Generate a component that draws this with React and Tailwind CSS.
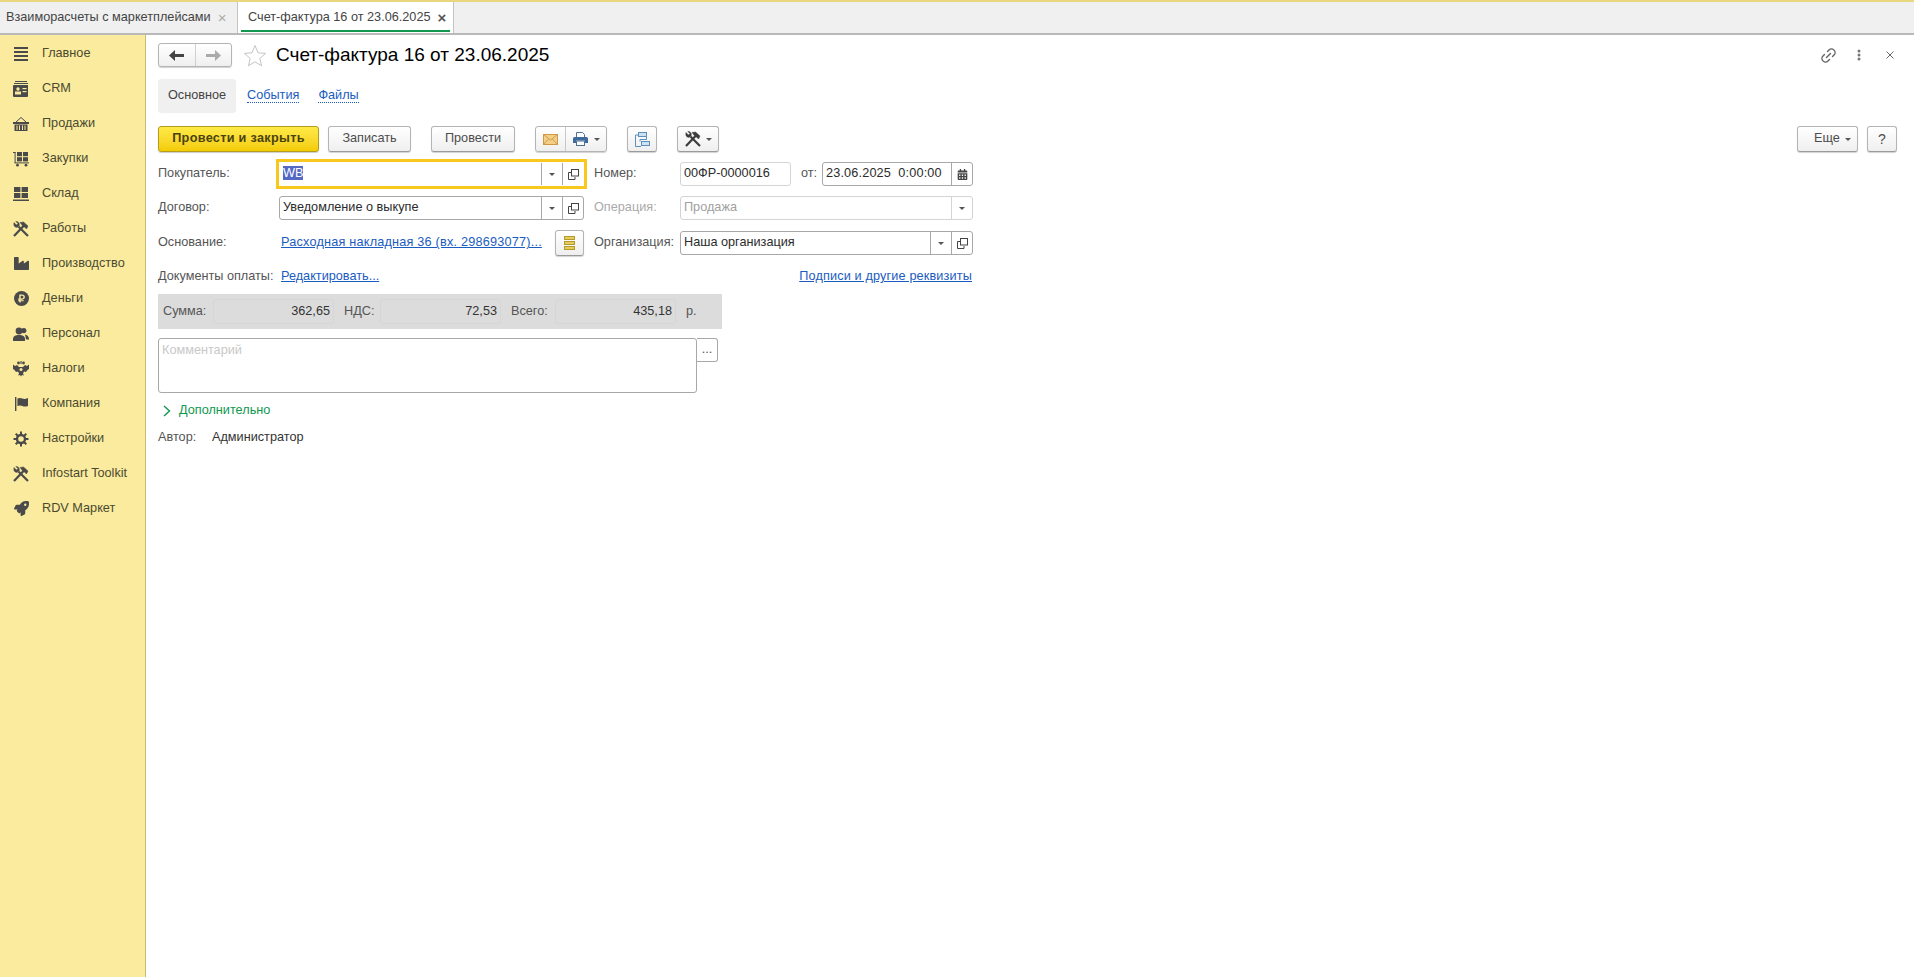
import { FaIndustry, FaRocket, FaRubleSign, FaCalendarAlt } from 'react-icons/fa';
import { FiLink2 } from 'react-icons/fi';

const BarsIcon = () => (
  <svg width="16" height="16" viewBox="0 0 16 16" fill="#4a4a4a">
    <rect x="1" y="1" width="14" height="2" />
    <rect x="1" y="5" width="14" height="2" />
    <rect x="1" y="9" width="14" height="2" />
    <rect x="1" y="13" width="14" height="2" />
  </svg>
);

const CardIcon = () => (
  <svg width="16" height="16" viewBox="0 0 16 16" fill="#4a4a4a">
    <rect x="2" y="0" width="12" height="1" />
    <rect x="1" y="2" width="14" height="1" />
    <path d="M1 4h14a1 1 0 0 1 0 0v11a1 1 0 0 1-1 1H1a1 1 0 0 1-1-1V5a1 1 0 0 1 1-1z" />
    <circle cx="5" cy="8" r="1.7" fill="#fbeb9e" />
    <rect x="2" y="10.5" width="6" height="3" fill="#fbeb9e" />
    <rect x="9.5" y="7" width="4" height="1.2" fill="#fbeb9e" />
    <rect x="9.5" y="10" width="4" height="1.2" fill="#fbeb9e" />
  </svg>
);

const BasketIcon = () => (
  <svg width="16" height="16" viewBox="0 0 16 16" fill="#4a4a4a">
    <path d="M3 6 L8 1.5 L13 6" fill="none" stroke="#4a4a4a" />
    <rect x="0" y="6" width="16" height="2" />
    <path d="M1.5 8.5h13V15h-13zM3.5 9.5v4.5h1V9.5zM6 9.5v4.5h1V9.5zM9 9.5v4.5h1V9.5zM11.5 9.5v4.5h1V9.5z" fillRule="evenodd" />
  </svg>
);

const CartIcon = () => (
  <svg width="16" height="16" viewBox="0 0 16 16" fill="#4a4a4a">
    <rect x="0" y="1" width="2.5" height="1" />
    <rect x="1.6" y="1" width="1" height="11" />
    <rect x="4" y="1" width="5" height="4.2" />
    <rect x="10" y="1" width="5" height="4.2" />
    <rect x="4" y="6.2" width="5" height="4.2" />
    <rect x="10" y="6.2" width="5" height="4.2" />
    <rect x="1.6" y="11.4" width="14.4" height="1" />
    <circle cx="4.5" cy="14.2" r="1.4" />
    <circle cx="13" cy="14.2" r="1.4" />
  </svg>
);

const StockIcon = () => (
  <svg width="16" height="16" viewBox="0 0 16 16" fill="#4a4a4a">
    <rect x="1" y="1" width="6.4" height="5" />
    <rect x="8.6" y="1" width="6.4" height="5" />
    <rect x="1" y="7" width="6.4" height="5" />
    <rect x="8.6" y="7" width="6.4" height="5" />
    <rect x="0" y="13.5" width="16" height="1.5" />
  </svg>
);

const ToolsIcon = ({ size = 16, color = '#4a4a4a' }) => (
  <svg width={size} height={size} viewBox="0 0 16 16" fill={color} stroke={color}>
    <path d="M1 15 11 4.5" strokeWidth="2.2" />
    <path d="M7 1.5 10.5 1 15 5l-1.5 3-2-2-1.5-.5-1-1.5z" strokeWidth="0.5" />
    <path d="M15 15 5.5 5.5" strokeWidth="2.2" />
    <path d="M1 1.5 3.5 4 5 2.5 2.7.5C5 0 7 2 6.3 4.4L4.5 6.3C2.4 7 0 5 1 1.5z" strokeWidth="0.4" />
  </svg>
);

const MoneyIcon = () => (
  <span className="flex h-[15px] w-[15px] items-center justify-center rounded-full bg-[#4a4a4a]">
    <FaRubleSign className="text-[#fbeb9e]" size={9} />
  </span>
);

const PeopleIcon = () => (
  <svg width="16" height="14" viewBox="0 0 16 14" fill="#4a4a4a">
    <circle cx="10.8" cy="3.6" r="2.6" />
    <path d="M12 7.5c2 .4 3.6 1.6 4 4v1h-3l-.5-3z" />
    <circle cx="6" cy="4" r="3.4" />
    <path d="M0 14v-2c0-2.6 2.4-4 6-4s6 1.4 6 4v2z" />
  </svg>
);

const EagleIcon = () => (
  <svg width="16" height="16" viewBox="0 0 16 16" fill="#4a4a4a">
    <circle cx="5.5" cy="2" r="1.4" />
    <circle cx="10.5" cy="2" r="1.4" />
    <rect x="7.4" y="0" width="1.2" height="3" />
    <path d="M0 3.5 2 5l2-1 2 2h4l2-2 2 1 2-1.5V8l-1.5 1L13 11l-2-.5-1 2 1 2-2-.5-1 1.5-1-1.5-2 .5 1-2-1-2L3 11 1.5 9 0 8z" />
    <circle cx="8" cy="8.5" r="1.5" fill="#fbeb9e" />
  </svg>
);

const FlagIcon = () => (
  <svg width="13" height="16" viewBox="0 0 13 16" fill="#4a4a4a">
    <rect x="0" y="1" width="1.4" height="14" />
    <path d="M2.4 2.5c2-1 3.6-.6 5 0s3 .6 5.6-.5v8c-2.6.8-4.2.6-5.6 0s-3-.8-5 0z" />
  </svg>
);

const GearIcon = () => (
  <svg width="16" height="16" viewBox="0 0 16 16" fill="none" stroke="#4a4a4a">
    <circle cx="8" cy="8" r="4" strokeWidth="2.4" />
    <path d="M8 .5v3M8 12.5v3M.5 8h3M12.5 8h3M2.7 2.7l2.1 2.1M11.2 11.2l2.1 2.1M13.3 2.7l-2.1 2.1M4.8 11.2l-2.1 2.1" strokeWidth="2" />
  </svg>
);

const MENU = [
  ['Главное', <BarsIcon />],
  ['CRM', <CardIcon />],
  ['Продажи', <BasketIcon />],
  ['Закупки', <CartIcon />],
  ['Склад', <StockIcon />],
  ['Работы', <ToolsIcon />],
  ['Производство', <FaIndustry size={15} />],
  ['Деньги', <MoneyIcon />],
  ['Персонал', <PeopleIcon />],
  ['Налоги', <EagleIcon />],
  ['Компания', <FlagIcon />],
  ['Настройки', <GearIcon />],
  ['Infostart Toolkit', <ToolsIcon />],
  ['RDV Маркет', <FaRocket size={15} />],
];

const Arrow = () => <span className="h-0 w-0 border-x-[3px] border-t-[3px] border-x-transparent border-t-[#555]" />;

const OpenIcon = () => (
  <svg width="11" height="11" viewBox="0 0 11 11" fill="none" stroke="#444">
    <rect x="3.5" y="0.5" width="7" height="6.5" />
    <path d="M3 3.5H0.5V10.5H7V8" />
  </svg>
);

const Btn = ({ className = '', children }) => (
  <button className={`flex h-[26px] items-center justify-center rounded-[3px] border border-[#b4b4b4] border-b-[#9a9a9a] bg-gradient-to-b from-white to-[#efefef] text-[#4d4d4d] shadow-[0_1px_1px_rgba(0,0,0,0.18)] ${className}`}>
    {children}
  </button>
);

const Field = ({ value, className = '', disabled, arrow, open, focus }) => {
  const border = disabled || open === 'light' ? 'border-[#d4d4d4]' : 'border-[#a8a8a8]';
  return (
    <div className={`flex h-[24px] items-center rounded-[3px] border ${border} bg-white ${className} ${focus ? 'border-transparent' : ''}`}>
      <span className={`min-w-0 flex-1 pl-[3px] ${disabled ? 'text-[#a0a0a0]' : 'text-[#2b2b2b]'}`}>
        {focus ? <span className="bg-[#5468c4] text-white">{value}</span> : value}
      </span>
      {arrow && (
        <span className={`flex h-full w-[21px] items-center justify-center border-l ${border}`}>
          <Arrow />
        </span>
      )}
      {open && open !== 'light' && (
        <span className={`flex h-full w-[21px] items-center justify-center border-l ${border}`}>
          <OpenIcon />
        </span>
      )}
    </div>
  );
};

const Label = ({ className = '', children }) => <span className={`shrink-0 text-[#555] ${className}`}>{children}</span>;

const Lnk = ({ className = '', children }) => <a className={`text-[#1a5cc0] underline ${className}`}>{children}</a>;

const Total = ({ label, labelW, value }) => (
  <>
    <span className={`shrink-0 text-[#555] ${labelW}`}>{label}</span>
    <span className="flex h-[25px] w-[121px] shrink-0 items-center justify-end rounded-[3px] border border-[#d6d6d6] pr-[3px] text-[#333]">
      {value}
    </span>
  </>
);

export default function App() {
  return (
    <div className="flex h-screen flex-col overflow-hidden bg-white text-[12.7px] text-[#333] [font-family:'Liberation_Sans',Arial,sans-serif]">
      {/* Tabs */}
      <div className="flex h-[35px] shrink-0 border-y-2 border-t-[#e9d77f] border-b-[#b9b9b9] bg-[#f0f0f0]">
        <div className="flex w-[238px] items-center border-r border-[#c4c4c4] pl-[6px] text-[#444]">
          <span>Взаиморасчеты с маркетплейсами</span>
          <span className="ml-[7px] text-[15px] leading-none text-[#aaa]">×</span>
        </div>
        <div className="relative flex w-[216px] items-center border-r border-[#c4c4c4] bg-white pl-[10px] text-[#444]">
          <span>Счет-фактура 16 от 23.06.2025</span>
          <span className="ml-[7px] text-[15px] font-bold leading-none text-[#555]">×</span>
          <span className="absolute bottom-[1px] left-[3px] right-[3px] h-[2px] bg-[#10984f]" />
        </div>
      </div>

      <div className="flex min-h-0 flex-1">
        {/* Sidebar */}
        <aside className="w-[146px] shrink-0 border-r border-[#c9bb72] bg-[#fbeb9e] pt-[1px]">
          {MENU.map(([name, icon]) => (
            <div key={name} className="flex h-[35px] items-center text-[#4a4a30]">
              <span className="flex w-[42px] justify-center text-[#4a4a4a]">{icon}</span>
              <span>{name}</span>
            </div>
          ))}
        </aside>

        {/* Document form */}
        <main className="min-w-0 flex-1 pl-[12px] pr-[17px] pt-[8px]">
          <div className="flex h-[24px] items-center">
            <div className="flex h-[24px] w-[74px] rounded-[3px] border border-[#b4b4b4] bg-gradient-to-b from-white to-[#efefef] shadow-[0_1px_1px_rgba(0,0,0,0.18)]">
              <span className="flex flex-1 items-center justify-center border-r border-[#d0d0d0]">
                <svg width="15" height="11" viewBox="0 0 15 11" fill="#444"><path d="M0 5.5 6 0v4h9v3H6v4z" /></svg>
              </span>
              <span className="flex flex-1 items-center justify-center">
                <svg width="15" height="11" viewBox="0 0 15 11" fill="#aaa"><path d="M15 5.5 9 0v4H0v3h9v4z" /></svg>
              </span>
            </div>
            <svg className="ml-[11px]" width="24" height="23" viewBox="0 0 24 23" fill="none" stroke="#c4c4c4">
              <path d="M12 1.5 15 8.8l7.6.6-5.8 5 1.8 7.4L12 17.8l-6.6 4 1.8-7.4-5.8-5 7.6-.6z" />
            </svg>
            <h1 className="ml-[9px] -translate-y-px text-[19px] leading-none text-black">Счет-фактура 16 от 23.06.2025</h1>
            <div className="ml-auto flex items-center text-[#666]">
              <FiLink2 size={17} className="-rotate-45" />
              <svg className="ml-[20px]" width="4" height="12" viewBox="0 0 4 12" fill="#777">
                <circle cx="2" cy="2" r="1.5" /><circle cx="2" cy="6" r="1.5" /><circle cx="2" cy="10" r="1.5" />
              </svg>
              <svg className="ml-[25px] mr-[3px]" width="8" height="8" viewBox="0 0 8 8" stroke="#666"><path d="M0.5 0.5 7.5 7.5M7.5 0.5 0.5 7.5" /></svg>
            </div>
          </div>

          {/* Form tabs */}
          <div className="mt-[12px] flex h-[34px] items-center">
            <span className="flex h-full w-[78px] items-center justify-center rounded-[3px] bg-[#f0f0f0] text-[#444]">Основное</span>
            <a className="ml-[11px] border-b border-dotted border-[#1a5cc0] leading-[13px] text-[#1a5cc0]">События</a>
            <a className="ml-[19px] border-b border-dotted border-[#1a5cc0] leading-[13px] text-[#1a5cc0]">Файлы</a>
          </div>

          {/* Command bar */}
          <div className="mt-[13px] flex h-[26px] items-center">
            <button className="flex h-[26px] w-[161px] items-center justify-center rounded-[3px] border border-[#b49c1e] bg-gradient-to-b from-[#ffea45] to-[#f3cc00] font-bold tracking-[0.3px] text-[#4a4210] shadow-[0_1px_1px_rgba(0,0,0,0.2)]">
              Провести и закрыть
            </button>
            <Btn className="ml-[9px] w-[83px]">Записать</Btn>
            <Btn className="ml-[20px] w-[84px]">Провести</Btn>
            <div className="ml-[20px] flex h-[26px] w-[72px] rounded-[3px] border border-[#b4b4b4] bg-gradient-to-b from-white to-[#efefef] shadow-[0_1px_1px_rgba(0,0,0,0.18)]">
              <span className="flex w-[30px] items-center justify-center border-r border-[#c8c8c8]">
                <svg width="15" height="11" viewBox="0 0 15 11" fill="#f3d08a" stroke="#d09a44">
                  <rect x="0.5" y="0.5" width="14" height="10" /><path d="M0.5 0.5 7.5 6l7-5.5M0.5 10.5 5.5 5M14.5 10.5 9.5 5" fill="none" />
                </svg>
              </span>
              <span className="flex flex-1 items-center justify-center gap-[6px]">
                <svg width="15" height="14" viewBox="0 0 15 14">
                  <path d="M3.5 5.5V.5h6l2 2v3" fill="#fff" stroke="#4d7296" />
                  <path d="M1.5 5h12A1.5 1.5 0 0 1 15 6.5V11h-3V8.5H3V11H0V6.5A1.5 1.5 0 0 1 1.5 5z" fill="#3f6a9c" />
                  <rect x="3.5" y="9" width="8" height="4.5" fill="#fff" stroke="#4d7296" />
                </svg>
                <Arrow />
              </span>
            </div>
            <Btn className="ml-[20px] w-[30px]">
              <svg width="15" height="15" viewBox="0 0 15 15" fill="none" stroke="#5b8fbe">
                <rect x="3.5" y="0.5" width="8" height="4" fill="#cfe0ee" />
                <rect x="6.5" y="9.5" width="8" height="4" fill="#cfe0ee" />
                <path d="M3 3H0.5v11.5H6M11.5 5v2.5H5v2" />
              </svg>
            </Btn>
            <Btn className="ml-[20px] w-[42px] gap-[5px]">
              <ToolsIcon color="#3c3c3c" />
              <Arrow />
            </Btn>
            <Btn className="ml-auto w-[61px] gap-[5px] pl-[10px]">Еще <Arrow /></Btn>
            <Btn className="ml-[9px] w-[30px] text-[14px]">?</Btn>
          </div>

          {/* Fields */}
          <div className="mt-[6px] flex">
            <div className="w-[436px] shrink-0">
              <div className="flex h-[32px] items-center">
                <Label className="w-[118px]">Покупатель:</Label>
                <div className="flex h-[30px] w-[311px] items-center border-[3px] border-[#f9c81e]">
                  <Field value="WB" focus arrow open className="w-full" />
                </div>
              </div>
              <div className="flex h-[36px] w-[426px] items-center">
                <Label className="w-[121px]">Договор:</Label>
                <Field value="Уведомление о выкупе" arrow open className="w-[305px]" />
              </div>
              <div className="flex h-[34px] w-[426px] items-center">
                <Label className="w-[123px]">Основание:</Label>
                <Lnk className="tracking-[0.2px]">Расходная накладная 36 (вх. 298693077)...</Lnk>
                <Btn className="ml-auto w-[29px]">
                  <svg width="11" height="14" viewBox="0 0 11 14" fill="#e6cc5a" stroke="#b39a2c">
                    <rect x="0.5" y="0.5" width="10" height="3" /><rect x="0.5" y="5.5" width="10" height="3" /><rect x="0.5" y="10.5" width="10" height="3" />
                  </svg>
                </Btn>
              </div>
              <div className="flex h-[34px] items-center">
                <Label className="w-[123px]">Документы оплаты:</Label>
                <Lnk>Редактировать...</Lnk>
              </div>
            </div>

            <div className="w-[379px] shrink-0">
              <div className="flex h-[32px] items-center">
                <Label className="w-[86px]">Номер:</Label>
                <Field value="00ФР-0000016" open="light" className="w-[111px]" />
                <Label className="ml-[10px] w-[21px]">от:</Label>
                <div className="flex h-[24px] w-[151px] items-center rounded-[3px] border border-[#a8a8a8] bg-white">
                  <span className="flex-1 pl-[3px] tracking-[0.15px] text-[#2b2b2b]">23.06.2025&nbsp;&nbsp;0:00:00</span>
                  <span className="flex h-full w-[21px] items-center justify-center border-l border-[#a8a8a8]">
                    <FaCalendarAlt size={11} className="text-[#444]" />
                  </span>
                </div>
              </div>
              <div className="flex h-[36px] items-center">
                <Label className="w-[86px] !text-[#aaa]">Операция:</Label>
                <Field value="Продажа" disabled arrow className="w-[293px]" />
              </div>
              <div className="flex h-[34px] items-center">
                <Label className="w-[86px]">Организация:</Label>
                <Field value="Наша организация" arrow open className="w-[293px]" />
              </div>
              <div className="flex h-[34px] items-center justify-end pr-[1px]">
                <Lnk className="tracking-[0.14px]">Подписи и другие реквизиты</Lnk>
              </div>
            </div>
          </div>

          {/* Totals */}
          <div className="flex h-[35px] w-[564px] items-center bg-[#dcdcdc] pl-[5px]">
            <Total label="Сумма:" labelW="w-[50px]" value="362,65" />
            <span className="w-[10px] shrink-0" />
            <Total label="НДС:" labelW="w-[36px]" value="72,53" />
            <span className="w-[10px] shrink-0" />
            <Total label="Всего:" labelW="w-[44px]" value="435,18" />
            <span className="ml-[10px] text-[#555]">р.</span>
          </div>

          {/* Comment */}
          <div className="mt-[9px] flex items-start">
            <div className="h-[55px] w-[539px] rounded-[3px] border border-[#a8a8a8] pl-[3px] pt-[2px] text-[#c8c8c8]">Комментарий</div>
            <button className="flex h-[24px] w-[21px] items-center justify-center rounded-r-[3px] border border-l-0 border-[#a8a8a8] text-[#555]">...</button>
          </div>

          <div className="mt-[9px] flex h-[17px] items-center pl-[5px] text-[#10984f]">
            <svg width="8" height="12" viewBox="0 0 8 12" fill="none" stroke="#10984f" strokeWidth="1.4"><path d="M1 1l5.5 5L1 11" /></svg>
            <span className="ml-[8px]">Дополнительно</span>
          </div>

          <div className="mt-[10px] flex h-[17px] items-center">
            <Label className="w-[54px]">Автор:</Label>
            <span>Администратор</span>
          </div>
        </main>
      </div>
    </div>
  );
}
